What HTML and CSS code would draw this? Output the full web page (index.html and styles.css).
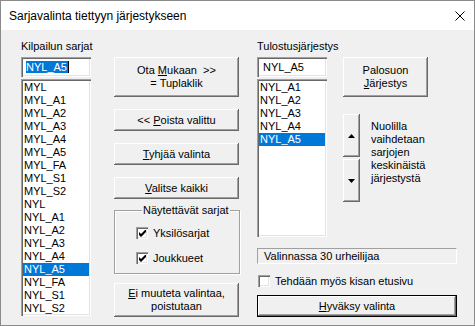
FILE: index.html
```html
<!DOCTYPE html>
<html lang="fi">
<head>
    <meta charset="UTF-8">
    <title>Sarjavalinta tiettyyn järjestykseen</title>
    <link rel="stylesheet" href="styles.css">
</head>
<body>
    <div class="dialog">
        <div class="titlebar">
            <span class="title">Sarjavalinta tiettyyn järjestykseen</span>
            <svg class="close" width="10" height="10" viewBox="0 0 10 10">
                <path d="M0.5 0.5 L9.5 9.5 M9.5 0.5 L0.5 9.5" stroke="#000" stroke-width="1"/>
            </svg>
        </div>

        <div class="client">
            <div class="col col-source">
                <div class="label">Kilpailun sarjat</div>
                <div class="edit"><span class="sel">NYL_A5</span><span class="caret"></span></div>
                <ul class="listbox listbox-source">
                    <li>MYL</li>
                    <li>MYL_A1</li>
                    <li>MYL_A2</li>
                    <li>MYL_A3</li>
                    <li>MYL_A4</li>
                    <li>MYL_A5</li>
                    <li>MYL_FA</li>
                    <li>MYL_S1</li>
                    <li>MYL_S2</li>
                    <li>NYL</li>
                    <li>NYL_A1</li>
                    <li>NYL_A2</li>
                    <li>NYL_A3</li>
                    <li>NYL_A4</li>
                    <li class="selected">NYL_A5</li>
                    <li>NYL_FA</li>
                    <li>NYL_S1</li>
                    <li>NYL_S2</li>
                </ul>
            </div>

            <div class="col col-actions">
                <button class="btn btn-tall">Ota <u>M</u>ukaan &nbsp;&gt;&gt;<br>= Tuplaklik</button>
                <button class="btn">&lt;&lt; <u>P</u>oista valittu</button>
                <button class="btn"><u>T</u>yhjää valinta</button>
                <button class="btn"><u>V</u>alitse kaikki</button>
                <fieldset class="group">
                    <legend>Näytettävät sarjat</legend>
                    <label class="check">
                        <span class="box checked"><svg width="7" height="7" viewBox="0 0 7 7"><path d="M0 2 L2 4 L7 -1 L7 2 L2 7 L0 5 Z" fill="#000"/></svg></span>
                        Yksilösarjat
                    </label>
                    <label class="check">
                        <span class="box checked"><svg width="7" height="7" viewBox="0 0 7 7"><path d="M0 2 L2 4 L7 -1 L7 2 L2 7 L0 5 Z" fill="#000"/></svg></span>
                        Joukkueet
                    </label>
                </fieldset>
                <button class="btn btn-exit"><u>E</u>i muuteta valintaa,<br>poistutaan</button>
            </div>

            <div class="col col-order">
                <div class="label">Tulostusjärjestys</div>
                <div class="order-row">
                    <div class="order-lists">
                        <div class="edit"><span class="plain">NYL_A5</span></div>
                        <ul class="listbox listbox-order">
                            <li>NYL_A1</li>
                            <li>NYL_A2</li>
                            <li>NYL_A3</li>
                            <li>NYL_A4</li>
                            <li class="selected">NYL_A5</li>
                        </ul>
                    </div>
                    <div class="order-tools">
                        <button class="btn btn-tall btn-palo">Palosuon<br><u>J</u>ärjestys</button>
                        <div class="mover">
                            <div class="arrows">
                                <button class="btn btn-arrow">
                                    <svg width="7" height="4" viewBox="0 0 7 4"><path d="M3.5 0 L7 4 L0 4 Z" fill="#000"/></svg>
                                </button>
                                <button class="btn btn-arrow">
                                    <svg width="7" height="4" viewBox="0 0 7 4"><path d="M0 0 L7 0 L3.5 4 Z" fill="#000"/></svg>
                                </button>
                            </div>
                            <p class="hint">Nuolilla<br>vaihdetaan<br>sarjojen<br>keskinäistä<br>järjestystä</p>
                        </div>
                    </div>
                </div>
                <div class="status">Valinnassa 30 urheilijaa</div>
                <label class="check check-front">
                    <span class="box"></span>
                    Tehdään myös kisan etusivu
                </label>
                <button class="btn btn-default"><u>H</u>yväksy valinta</button>
            </div>
        </div>
    </div>
</body>
</html>
```

FILE: styles.css
```css
:root {
    --face: #f0f0f0;
    --light: #e3e3e3;
    --shadow: #a0a0a0;
    --dark: #696969;
    --select: #0078d7;
}

* {
    margin: 0;
    padding: 0;
    box-sizing: border-box;
}

body {
    background: #fff;
    font-family: 'Liberation Sans', Arial, sans-serif;
    font-size: 11px;
    color: #000;
}

.dialog {
    width: 475px;
    height: 326px;
    border: 1px solid #8a8a8a;
    background: var(--face);
    display: flex;
    flex-direction: column;
}

.titlebar {
    height: 29px;
    background: #fff;
    display: flex;
    align-items: center;
    justify-content: space-between;
    padding: 0 9px 0 8px;
}

.title {
    font-size: 12px;
}

.client {
    flex: 1;
    display: flex;
    padding: 10px 0 0 20px;
}

.col {
    display: flex;
    flex-direction: column;
}

.label {
    height: 13px;
    line-height: 13px;
    margin-bottom: 4px;
    white-space: nowrap;
}

/* sunken fields */
.edit,
.listbox,
.box {
    background: #fff;
    box-shadow:
        inset 1px 1px var(--shadow),
        inset 2px 2px var(--dark),
        inset -1px -1px #fff,
        inset -2px -2px var(--light);
}

.edit {
    height: 20px;
    padding: 4px 4px 0 5px;
    line-height: 12px;
    display: flex;
    align-items: flex-start;
}

.sel {
    background: var(--select);
    color: #fff;
    padding: 0 1px 0 0;
}

.caret {
    width: 1px;
    height: 12px;
    background: #000;
}

.listbox {
    list-style: none;
    margin-top: 2px;
    padding: 2px;
}

.listbox li {
    height: 13px;
    line-height: 13px;
    padding-left: 1px;
}

.listbox li.selected {
    background: var(--select);
    color: #fff;
}

.col-source {
    width: 70px;
}

.listbox-source {
    height: 237px;
}

/* buttons */
.btn {
    width: 125px;
    height: 22px;
    border: none;
    background: var(--face);
    font: inherit;
    color: #000;
    line-height: 13px;
    box-shadow:
        inset -1px -1px var(--dark),
        inset 1px 1px #fff,
        inset -2px -2px var(--shadow);
}

.btn-tall {
    height: 40px;
}

.col-actions {
    width: 126px;
    margin-left: 23px;
    padding-top: 17px;
    gap: 12px;
}

.group {
    margin-top: -7px;
    width: 126px;
    border: 1px solid var(--shadow);
    box-shadow: inset 1px 1px #fff, 1px 1px #fff;
    padding: 9px 0 9px 21px;
    display: flex;
    flex-direction: column;
    gap: 12px;
}

.group legend {
    margin-left: 6px;
    padding: 0 1px;
    line-height: 13px;
    background: var(--face);
}

.check {
    display: flex;
    align-items: center;
    height: 13px;
    gap: 5px;
}

.box {
    width: 12px;
    height: 12px;
    display: flex;
    align-items: center;
    justify-content: center;
    padding: 1px 0 0 1px;
}

.btn-exit {
    height: 34px;
    margin-top: -3px;
}

.col-order {
    width: 200px;
    margin-left: 17px;
}

.order-row {
    display: flex;
    gap: 16px;
}

.order-lists {
    width: 70px;
    display: flex;
    flex-direction: column;
}

.plain {
    padding-left: 1px;
}

.listbox-order {
    height: 158px;
}

.btn-palo {
    width: 85px;
}

.mover {
    display: flex;
    margin-top: 17px;
}

.arrows {
    display: flex;
    flex-direction: column;
    gap: 2px;
}

.btn-arrow {
    width: 17px;
    height: 43px;
    display: flex;
    align-items: center;
    justify-content: center;
}

.hint {
    margin: 6px 0 0 11px;
    line-height: 13px;
}

.status {
    margin-top: 11px;
    height: 16px;
    line-height: 15px;
    padding-left: 6px;
    border: 1px solid;
    border-color: var(--shadow) #fff #fff var(--shadow);
}

.check-front {
    margin: 10px 0 0 1px;
}

.check-front .box {
    width: 12px;
    height: 12px;
}

.btn-default {
    width: 200px;
    margin-top: 8px;
    border: 1px solid #000;
}
```
